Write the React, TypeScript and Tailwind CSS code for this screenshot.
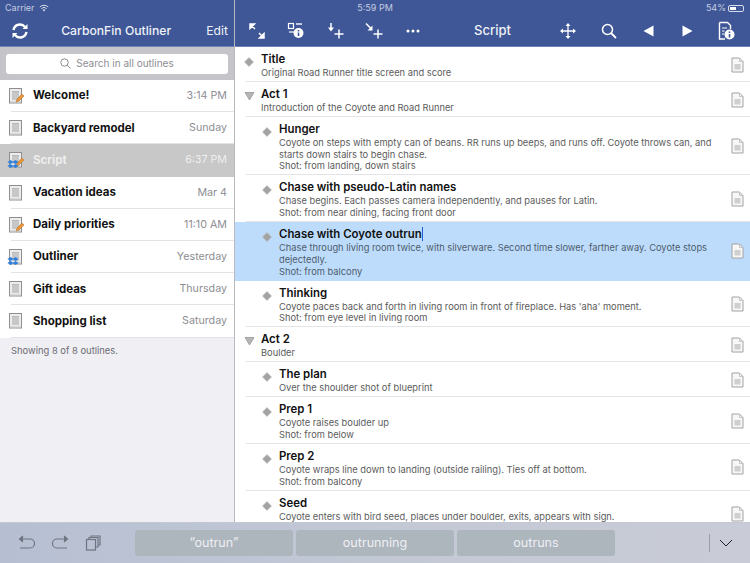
import type { ReactNode } from "react";

const OUTLINES: { name: string; time: string; badge?: "pencil" | "sync" | "both"; selected?: boolean }[] = [
  { name: "Welcome!", time: "3:14 PM", badge: "pencil" },
  { name: "Backyard remodel", time: "Sunday" },
  { name: "Script", time: "6:37 PM", badge: "both", selected: true },
  { name: "Vacation ideas", time: "Mar 4" },
  { name: "Daily priorities", time: "11:10 AM", badge: "pencil" },
  { name: "Outliner", time: "Yesterday", badge: "sync" },
  { name: "Gift ideas", time: "Thursday" },
  { name: "Shopping list", time: "Saturday" },
];

const ROWS: { title: ReactNode; lines: string[]; child?: boolean; open?: boolean; selected?: boolean }[] = [
  { title: "Title", lines: ["Original Road Runner title screen and score"] },
  { title: "Act 1", lines: ["Introduction of the Coyote and Road Runner"], open: true },
  {
    title: "Hunger",
    child: true,
    lines: [
      "Coyote on steps with empty can of beans. RR runs up beeps, and runs off. Coyote throws can, and",
      "starts down stairs to begin chase.",
      "Shot: from landing, down stairs",
    ],
  },
  {
    title: "Chase with pseudo-Latin names",
    child: true,
    lines: ["Chase begins. Each passes camera independently, and pauses for Latin.", "Shot: from near dining, facing front door"],
  },
  {
    title: (
      <>
        Chase with Coyote outrun
        <span className="inline-block h-[14px] w-px bg-[#1f5fd0] align-[-3px]" />
      </>
    ),
    child: true,
    selected: true,
    lines: [
      "Chase through living room twice, with silverware. Second time slower, farther away. Coyote stops",
      "dejectedly.",
      "Shot: from balcony",
    ],
  },
  {
    title: "Thinking",
    child: true,
    lines: ["Coyote paces back and forth in living room in front of fireplace. Has 'aha' moment.", "Shot: from eye level in living room"],
  },
  { title: "Act 2", lines: ["Boulder"], open: true },
  { title: "The plan", child: true, lines: ["Over the shoulder shot of blueprint"] },
  { title: "Prep 1", child: true, lines: ["Coyote raises boulder up", "Shot: from below"] },
  { title: "Prep 2", child: true, lines: ["Coyote wraps line down to landing (outside railing). Ties off at bottom.", "Shot: from balcony"] },
  { title: "Seed", child: true, lines: ["Coyote enters with bird seed, places under boulder, exits, appears with sign.", "\u00a0"] },
];

function OutlineIcon({ badge }: { badge?: "pencil" | "sync" | "both" }) {
  return (
    <svg width="18" height="18" viewBox="0 0 18 18" className="shrink-0">
      <rect x="2.5" y="1.5" width="12" height="14.5" fill="#ececec" stroke="#8f8f8f" />
      <rect x="3" y="14.500" width="11" height="1.500" fill="#c4c4c4" />
      <rect x="5" y="4" width="7" height="9" fill="#b9b9b9" />
      <path d="M5 6h7M5 8h7M5 10h7M5 12h7" stroke="#e2e2e2" strokeWidth="0.7" />
      {(badge === "pencil" || badge === "both") && (
        <path d="M9 15l1-3 5-5 2 2-5 5z" fill="#e8963a" stroke="#b96d1c" strokeWidth="0.5" />
      )}
      {(badge === "sync" || badge === "both") && (
        <g fill="#2f7fdc">
          <path d="M3.500 9l3 2-3 2-3-2z" />
          <path d="M8.500 9l3 2-3 2-3-2z" />
          <path d="M3.500 13l3 2-3 2-3-2z" />
          <path d="M8.500 13l3 2-3 2-3-2z" />
        </g>
      )}
    </svg>
  );
}

function SmallDoc() {
  return (
    <svg width="13" height="16" viewBox="0 0 13 16" className="shrink-0">
      <path d="M1 1h7.500L12 4.500V15H1z" fill="#f7f7f7" stroke="#a2a2a2" />
      <path d="M8.500 1v3.500H12" fill="none" stroke="#c4c4c4" />
      <rect x="3.500" y="7" width="6" height="5.500" fill="#cfcfcf" />
    </svg>
  );
}

function Diamond() {
  return (
    <svg width="10" height="10" viewBox="0 0 10 10">
      <path d="M5 .5L9.500 5 5 9.500.5 5z" fill="#a3a3a3" stroke="#bcbcbc" strokeWidth="0.6" />
    </svg>
  );
}

function Triangle() {
  return (
    <svg width="11" height="10" viewBox="0 0 11 10">
      <path d="M1 1.500h9L5.500 9z" fill="#b5b5b5" stroke="#8f8f8f" strokeWidth="0.7" />
    </svg>
  );
}

function Glyph({ children }: { children: ReactNode }) {
  return (
    <svg width="20" height="20" viewBox="0 0 20 20" fill="none" stroke="white" strokeWidth="1.500">
      {children}
    </svg>
  );
}

function NavButton({ children }: { children: ReactNode }) {
  return <div className="flex w-[39px] items-center justify-center">{children}</div>;
}

function InfoBadge({ cx, cy }: { cx: number; cy: number }) {
  return (
    <>
      <circle cx={cx} cy={cy} r="5" fill="white" stroke="none" />
      <path d={`M${cx} ${cy - 2.9}v1.400M${cx} ${cy - 0.6}v3.600`} stroke="#3f5796" strokeWidth="1.600" />
    </>
  );
}

function OutlineRow({ row }: { row: (typeof ROWS)[number] }) {
  return (
    <div className={`relative flex shrink-0 items-center pr-[6px] ${row.child ? "pl-[27px]" : "pl-[9px]"} ${row.selected ? "bg-[#bddcfb]" : ""}`}>
      <div className={`flex w-[17px] shrink-0 flex-col self-start ${row.open ? "pt-[9px]" : "pt-[10px]"}`}>
        {row.open ? <Triangle /> : <Diamond />}
      </div>
      <div className="min-w-0 flex-1 pb-[3.300px] pt-1">
        <div className="h-4 text-[11.400px] font-semibold leading-4 text-[#111]">{row.title}</div>
        {row.lines.map((l) => (
          <div key={l} className={`whitespace-nowrap text-[9.300px] leading-[11.700px] ${row.selected ? "text-[#4d5d6d]" : "text-[#5c5c5c]"}`}>
            {l}
          </div>
        ))}
      </div>
      <SmallDoc />
      {!row.selected && <div className="absolute bottom-0 left-[11px] right-0 h-px bg-[#e4e4e6]" />}
    </div>
  );
}

export default function App() {
  return (
    <div className="relative flex h-[563px] w-[750px] flex-col overflow-hidden bg-white font-['Inter','Liberation_Sans',sans-serif]">
      {/* Status bar */}
      <div className="absolute left-0 right-0 top-0 z-10 flex h-4 items-center justify-between px-[5px] text-[9px] text-[#c5cde2]">
        <div className="flex items-center gap-1">
          Carrier
          <svg width="10" height="8" viewBox="0 0 10 8" fill="none" stroke="#d5dbea">
            <path d="M.8 3a6 6 0 018.400 0M2.400 4.600a3.700 3.700 0 015.200 0" />
            <path d="M5 7.500L3.600 6a2 2 0 012.800 0z" fill="#d5dbea" stroke="none" />
          </svg>
        </div>
        <div className="absolute left-0 right-0 text-center">5:59 PM</div>
        <div className="flex items-center gap-[2px] pr-[1px]">
          54%
          <div className="h-[7px] w-[16px] rounded-[2px] border border-[#d5dbea] p-px">
            <div className="h-full w-[54%] bg-white" />
          </div>
        </div>
      </div>

      <div className="flex min-h-0 flex-1">
        {/* Sidebar */}
        <div className="flex w-[235px] shrink-0 flex-col border-r border-[#b9b9c0] bg-[#efeff4]">
          <div className="flex h-[47px] shrink-0 items-center border-b border-[#6e82b5] bg-[#3f5796] pl-[11px] pr-[6px] pt-4">
            <svg width="18" height="18" viewBox="0 0 18 18" fill="none" stroke="white" strokeWidth="2.400">
              <path d="M2.500 8a6.500 6.500 0 0111.500-3" />
              <path d="M15.500 10a6.500 6.500 0 01-11.500 3" />
              <path d="M16.500 2v5h-5z" fill="white" stroke="none" />
              <path d="M1.500 16v-5h5z" fill="white" stroke="none" />
            </svg>
            <div className="flex-1 pr-[3px] text-center text-[12.200px] font-medium text-[#eef1f8]">CarbonFin Outliner</div>
            <div className="text-[12.200px] text-[#eef1f8]">Edit</div>
          </div>
          <div className="flex h-[33px] shrink-0 items-center bg-[#c4c4c9] px-[6px]">
            <div className="flex h-[20px] w-full items-center justify-center gap-[5px] rounded-[3px] bg-white text-[10px] text-[#8e8e93]">
              <svg width="11" height="11" viewBox="0 0 11 11" fill="none" stroke="#8e8e93">
                <circle cx="4.500" cy="4.500" r="3.700" />
                <path d="M7.200 7.200l3.300 3.300" />
              </svg>
              Search in all outlines
            </div>
          </div>
          <div className="bg-white">
            {OUTLINES.map((o) => (
              <div
                key={o.name}
                className={`relative flex h-[32.200px] items-center pl-[7px] pr-[7px] ${o.selected ? "bg-[#c8c8c8]" : ""}`}
              >
                <OutlineIcon badge={o.badge} />
                <div className={`ml-[8px] flex-1 text-[11.500px] font-bold ${o.selected ? "text-[#eeeeee]" : "text-[#111]"}`}>{o.name}</div>
                <div className={`text-[10.700px] ${o.selected ? "text-[#eeeeee]" : "text-[#8e8e93]"}`}>{o.time}</div>
                {!o.selected && <div className="absolute bottom-0 left-[11px] right-0 h-px bg-[#e2e2e4]" />}
              </div>
            ))}
          </div>
          <div className="px-[11px] pt-[6px] text-[9.400px] text-[#6d6d72]">Showing 8 of 8 outlines.</div>
        </div>

        {/* Outline */}
        <div className="flex min-w-0 flex-1 flex-col">
          <div className="flex h-[47px] shrink-0 items-center border-b border-[#6e82b5] bg-[#3f5796] pl-[2.500px] pr-[4.500px] pt-4">
            <NavButton>
              <Glyph>
                <path d="M3 3l5 5M3 3h4.500L3 7.500z" fill="white" />
                <path d="M17 17l-5-5M17 17h-4.500L17 12.500z" fill="white" />
              </Glyph>
            </NavButton>
            <NavButton>
              <Glyph>
                <rect x="2.500" y="2.500" width="5" height="5" strokeWidth="1.200" />
                <path d="M10 3h6" strokeWidth="1.400" />
                <path d="M3 11h5" strokeWidth="1.200" />
                <InfoBadge cx={12.500} cy={12} />
              </Glyph>
            </NavButton>
            <NavButton>
              <Glyph>
                <path d="M6 2v6" />
                <path d="M3 6.500h6L6 10.500z" fill="white" stroke="none" />
                <path d="M14 8.500v9M9.500 13h9" />
              </Glyph>
            </NavButton>
            <NavButton>
              <Glyph>
                <path d="M2 2.500l5.500 5.500" />
                <path d="M8.500 4.500v5h-5z" fill="white" stroke="none" />
                <path d="M14 8.500v9M9.500 13h9" />
              </Glyph>
            </NavButton>
            <NavButton>
              <svg width="14" height="4" viewBox="0 0 14 4" fill="white">
                <circle cx="2" cy="2" r="1.500" />
                <circle cx="7" cy="2" r="1.500" />
                <circle cx="12" cy="2" r="1.500" />
              </svg>
            </NavButton>
            <div className="flex-1 pl-[4px] text-center text-[13px] font-medium text-[#eef1f8]">Script</div>
            <div className="mr-[3px] flex w-[38px] items-center justify-center">
              <Glyph>
                <path d="M10 3v14M3 10h14" strokeWidth="1.300" />
                <path d="M10 2l2.500 3h-5zM10 18l2.500-3h-5zM2 10l3-2.500v5zM18 10l-3-2.500v5z" fill="white" stroke="none" />
              </Glyph>
            </div>
            <NavButton>
              <Glyph>
                <circle cx="8.500" cy="8.500" r="5" />
                <path d="M12 12l5 5" strokeWidth="1.800" />
              </Glyph>
            </NavButton>
            <NavButton>
              <svg width="11" height="12" viewBox="0 0 11 12" fill="white">
                <path d="M.5 6L10.500.5v11z" />
              </svg>
            </NavButton>
            <NavButton>
              <svg width="11" height="12" viewBox="0 0 11 12" fill="white">
                <path d="M10.500 6L.5.5v11z" />
              </svg>
            </NavButton>
            <NavButton>
              <Glyph>
                <path d="M3.500 1.500h8l3 3V8M9 18H3.500V1.500" strokeWidth="1.400" />
                <path d="M6 7h5M6 10h2.500M6 13h2" strokeWidth="1.200" />
                <InfoBadge cx={13.500} cy={13.500} />
              </Glyph>
            </NavButton>
          </div>
          <div className="flex min-h-0 flex-1 flex-col overflow-hidden">
            {ROWS.map((r, i) => (
              <OutlineRow key={i} row={r} />
            ))}
          </div>
        </div>
      </div>

      {/* Keyboard accessory bar */}
      <div className="flex h-[41px] shrink-0 items-center border-t border-[#c4c8d2] bg-gradient-to-r from-[#b6bfd2] via-[#c3c8d5] to-[#c9ccd6] pl-[18px] pr-[17px]">
        <svg width="18" height="16" viewBox="0 0 18 16" fill="none" stroke="#6f7480" strokeWidth="1.200">
          <path d="M2 4h10a4 4 0 010 9H2" />
          <path d="M5 1L1.500 4 5 7" fill="#6f7480" />
        </svg>
        <svg width="18" height="16" viewBox="0 0 18 16" fill="none" stroke="#6f7480" strokeWidth="1.200" className="ml-[15px]">
          <path d="M16 4H6a4 4 0 000 9h10" />
          <path d="M13 1l3.500 3L13 7" fill="#6f7480" />
        </svg>
        <svg width="16" height="16" viewBox="0 0 16 16" fill="none" stroke="#6f7480" strokeWidth="1.200" className="ml-[16px]">
          <rect x="1.500" y="4.500" width="9" height="10.500" />
          <path d="M4 4V2.500h9V12h-2.500M6 2V1h9v9h-1.500" />
        </svg>
        <div className="ml-[34px] flex gap-[3px]">
          {["“outrun”", "outrunning", "outruns"].map((s) => (
            <div key={s} className="flex h-[26px] w-[158px] items-center justify-center rounded-[3px] bg-[#adb5bd] text-[12.600px] text-[#eef0f3]">
              {s}
            </div>
          ))}
        </div>
        <div className="flex-1" />
        <div className="h-[18px] w-px bg-[#9a9ea8]" />
        <svg width="14" height="8" viewBox="0 0 14 8" fill="none" stroke="#222" strokeWidth="1" className="ml-[9px]">
          <path d="M1 1l6 6 6-6" />
        </svg>
      </div>
    </div>
  );
}
